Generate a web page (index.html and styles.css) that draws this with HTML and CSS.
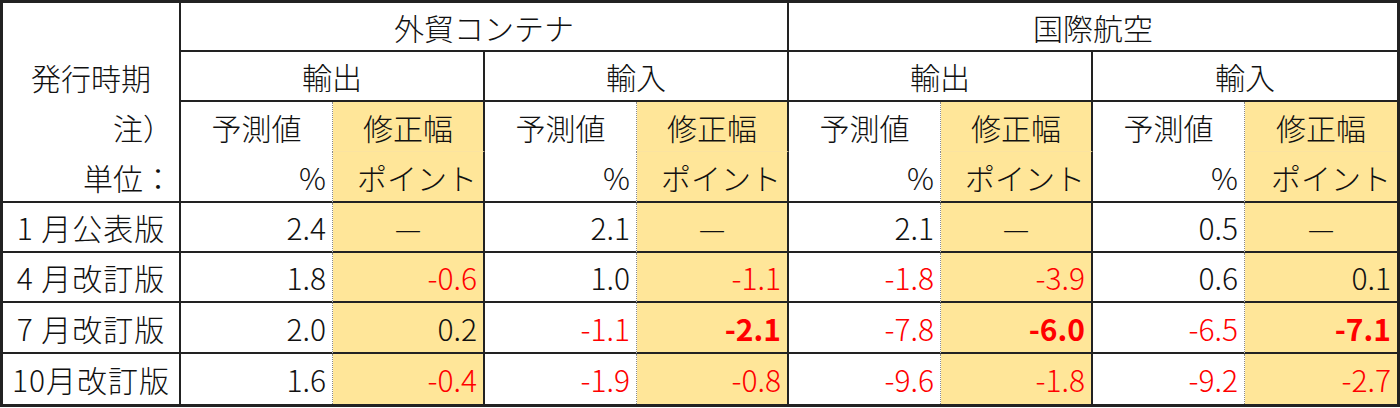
FILE: index.html
```html
<!DOCTYPE html>
<html lang="ja">
<head>
<meta charset="utf-8">
<link rel="stylesheet" href="styles.css">
</head>
<body>
<div class="tbl">
  <div class="corner">
    <div class="cl"></div>
    <div class="cl center">発行時期</div>
    <div class="cl right">注）</div>
    <div class="cl right">単位：</div>
  </div>
  <div class="c h span4">外貿コンテナ</div>
  <div class="c h span4 last">国際航空</div>

  <div class="c h span2">輸出</div>
  <div class="c h span2">輸入</div>
  <div class="c h span2">輸出</div>
  <div class="c h span2 last">輸入</div>

  <div class="c h sub dot">予測値</div>
  <div class="c h y faint">修正幅</div>
  <div class="c h sub dot">予測値</div>
  <div class="c h y faint">修正幅</div>
  <div class="c h sub dot">予測値</div>
  <div class="c h y faint">修正幅</div>
  <div class="c h sub dot">予測値</div>
  <div class="c h y faint last">修正幅</div>

  <div class="c r dot">%</div>
  <div class="c r y">ポイント</div>
  <div class="c r dot">%</div>
  <div class="c r y">ポイント</div>
  <div class="c r dot">%</div>
  <div class="c r y">ポイント</div>
  <div class="c r dot">%</div>
  <div class="c r y last">ポイント</div>

  <div class="c lab">1 月公表版</div>
  <div class="c r dot">2.4</div>
  <div class="c h y">—</div>
  <div class="c r dot">2.1</div>
  <div class="c h y">—</div>
  <div class="c r dot">2.1</div>
  <div class="c h y">—</div>
  <div class="c r dot">0.5</div>
  <div class="c h y last">—</div>

  <div class="c lab">4 月改訂版</div>
  <div class="c r dot">1.8</div>
  <div class="c r y neg">-0.6</div>
  <div class="c r dot">1.0</div>
  <div class="c r y neg">-1.1</div>
  <div class="c r dot neg">-1.8</div>
  <div class="c r y neg">-3.9</div>
  <div class="c r dot">0.6</div>
  <div class="c r y last">0.1</div>

  <div class="c lab">7 月改訂版</div>
  <div class="c r dot">2.0</div>
  <div class="c r y">0.2</div>
  <div class="c r dot neg">-1.1</div>
  <div class="c r y neg b">-2.1</div>
  <div class="c r dot neg">-7.8</div>
  <div class="c r y neg b">-6.0</div>
  <div class="c r dot neg">-6.5</div>
  <div class="c r y neg b last">-7.1</div>

  <div class="c lab bot">10月改訂版</div>
  <div class="c r dot bot">1.6</div>
  <div class="c r y neg bot">-0.4</div>
  <div class="c r dot neg bot">-1.9</div>
  <div class="c r y neg bot">-0.8</div>
  <div class="c r dot neg bot">-9.6</div>
  <div class="c r y neg bot">-1.8</div>
  <div class="c r dot neg bot">-9.2</div>
  <div class="c r y neg bot last">-2.7</div>
</div>
</body>
</html>
```

FILE: styles.css
```css
html, body {
  margin: 0;
  padding: 0;
  background: #ffffff;
}

body {
  font-family: "Noto Sans CJK JP", "Noto Sans", sans-serif;
  font-size: 30px;
  font-weight: 300;
  color: #111111;
}

.tbl {
  box-sizing: border-box;
  width: 1400px;
  border: 3px solid #222222;
  display: grid;
  grid-template-columns: 178px repeat(8, 152px);
  grid-template-rows: 49px 50px 50px 51px 50px 50px 51px 50px;
}

.c {
  box-sizing: border-box;
  border-right: 2px solid #222222;
  border-bottom: 2px solid #222222;
  display: flex;
  align-items: center;
  white-space: nowrap;
  line-height: 1;
}

.corner {
  grid-row: 1 / span 4;
  grid-column: 1;
  border-right: 2px solid #222222;
  border-bottom: 2px solid #222222;
  display: grid;
  grid-template-rows: 49px 50px 50px 49px;
}

.cl {
  display: flex;
  align-items: center;
  padding: 0 6px;
  line-height: 1;
}

.center { justify-content: center; }
.right { justify-content: flex-end; }

.h { justify-content: center; }
.r { justify-content: flex-end; padding-right: 6px; }

.span4 { grid-column: span 4; }
.span2 { grid-column: span 2; }

.sub { border-bottom: none; }

.dot { border-right: 1px dotted #8a8a8a; }

.y { background: #ffe699; }

.faint { border-bottom: 1px solid #fbe3a0; }

.last { border-right: none; }

.bot { border-bottom: none; }

.lab { justify-content: center; letter-spacing: 1px; }

.neg { color: #ff0000; }

.b { font-weight: 700; }
```
